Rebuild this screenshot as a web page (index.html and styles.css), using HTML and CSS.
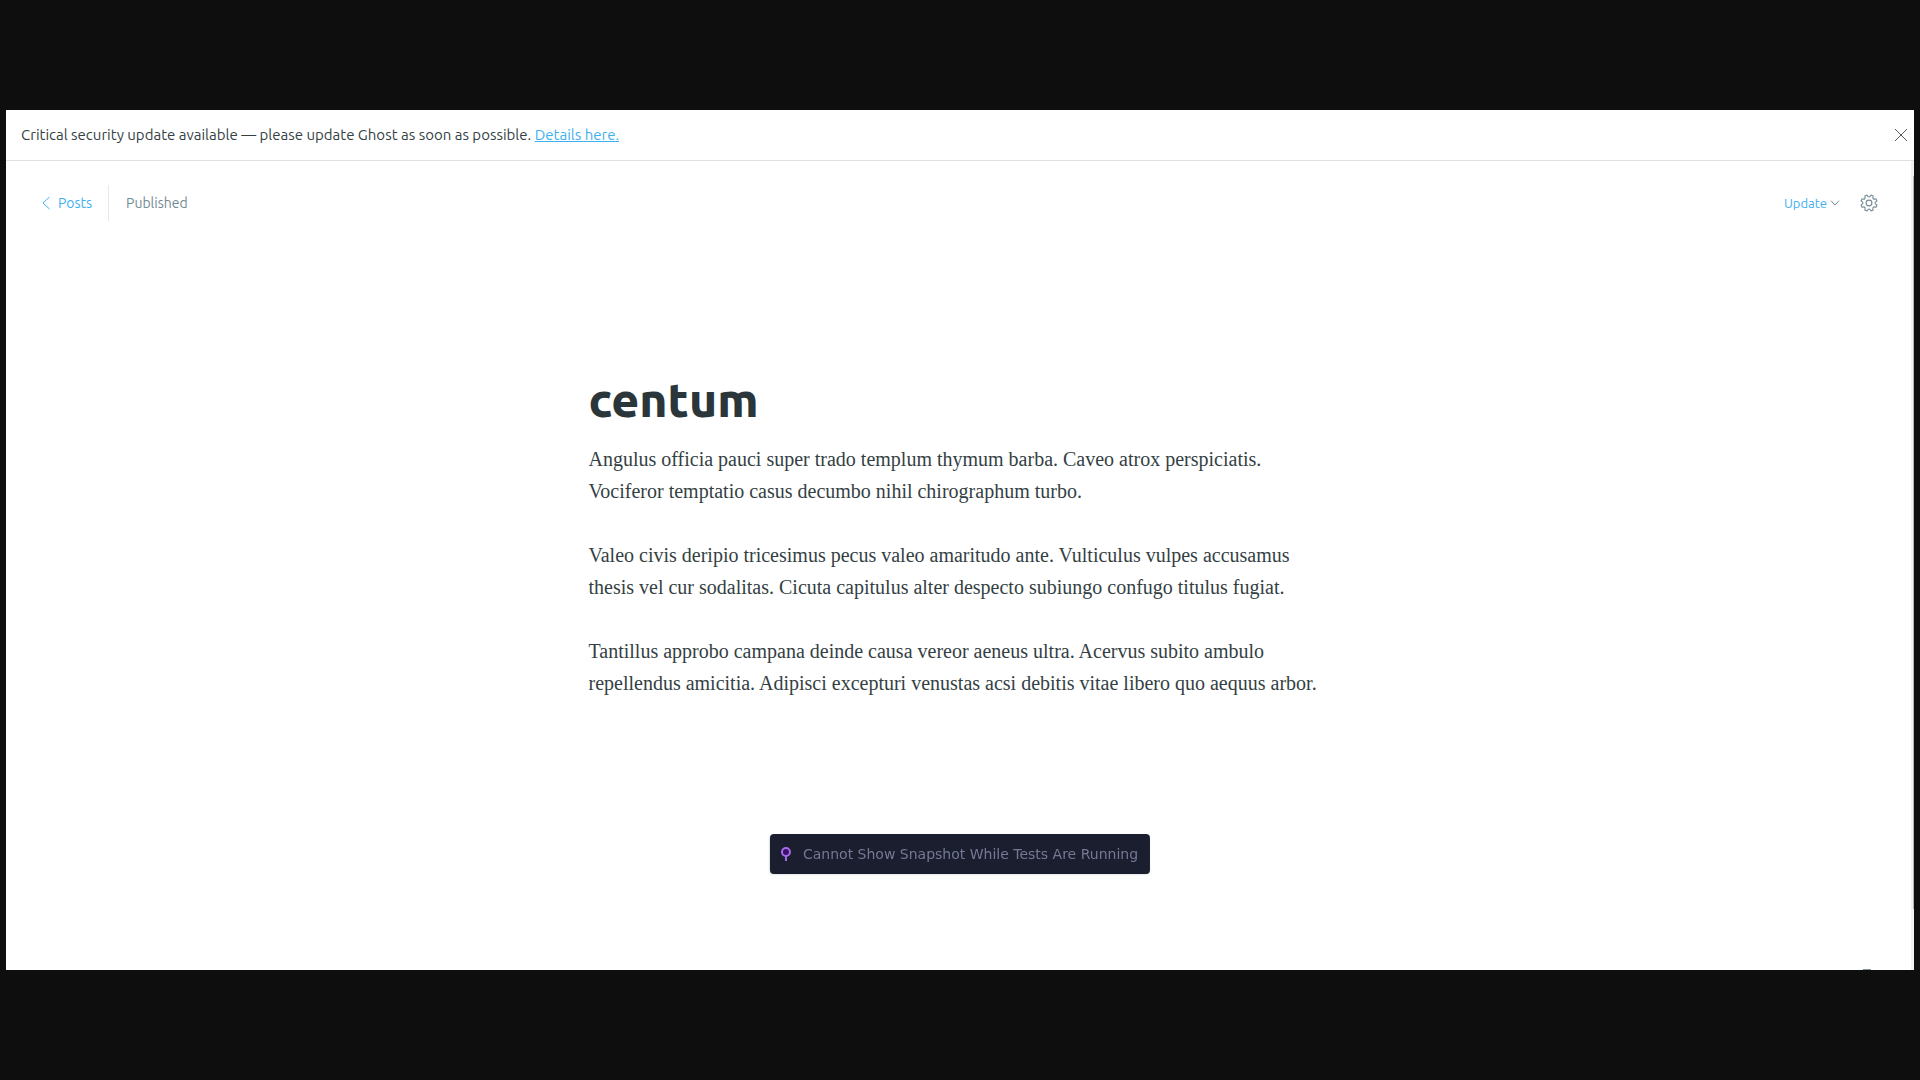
FILE: index.html
```html
<!DOCTYPE html>
<html lang="en">
<head>
<meta charset="utf-8">
<title>centum</title>
<link rel="stylesheet" href="styles.css">
</head>
<body>
<div class="app">
  <aside class="alert">
    <p class="alert-text">Critical security update available — please update Ghost as soon as possible. <a class="alert-link" href="#details">Details here.</a></p>
    <button class="icon-button alert-close" type="button" aria-label="Close">
      <svg width="14" height="14" viewBox="0 0 14 14" fill="none" stroke="currentColor"><path d="M1 1l12 12M13 1L1 13"/></svg>
    </button>
  </aside>
  <div class="viewport">
    <main class="editor">
      <header class="toolbar">
        <a class="back" href="#posts"><svg width="8" height="14" viewBox="0 0 8 14" fill="none" stroke="currentColor"><path d="M7.500 1L1 7l6.500 6"/></svg>Posts</a>
        <span class="status">Published</span>
        <div class="actions">
          <button class="update" type="button">Update<svg width="10" height="6" viewBox="0 0 10 6" fill="none" stroke="#738a94"><path d="M1 .7L5 5 9 .7"/></svg></button>
          <button class="icon-button settings" type="button" aria-label="Settings">
            <svg width="18" height="18" viewBox="0 0 18 18" fill="none" stroke="currentColor" stroke-width="1.100" stroke-linejoin="round"><circle cx="9" cy="9" r="2.900"/><path d="M6.950 1.060Q9 4.900 11.050 1.060L13.160 1.930Q11.900 6.100 16.070 4.840L16.940 6.950Q13.100 9 16.940 11.050L16.070 13.160Q11.900 11.900 13.160 16.070L11.050 16.940Q9 13.100 6.950 16.940L4.840 16.070Q6.100 11.900 1.930 13.160L1.060 11.050Q4.900 9 1.060 6.950L1.930 4.840Q6.100 6.100 4.840 1.930Z"/></svg>
          </button>
        </div>
      </header>
      <article class="post">
        <h1 class="title">centum</h1>
        <p>Angulus officia pauci super trado templum thymum barba. Caveo atrox perspiciatis. Vociferor temptatio casus decumbo nihil chirographum turbo.</p>
        <p>Valeo civis deripio tricesimus pecus valeo amaritudo ante. Vulticulus vulpes accusamus thesis vel cur sodalitas. Cicuta capitulus alter despecto subiungo confugo titulus fugiat.</p>
        <p>Tantillus approbo campana deinde causa vereor aeneus ultra. Acervus subito ambulo repellendus amicitia. Adipisci excepturi venustas acsi debitis vitae libero quo aequus arbor.</p>
      </article>
      <span class="help-edge"></span>
    </main>
    <div class="scrollbar"><div class="thumb"></div></div>
  </div>
</div>
<div class="snapshot" role="status">
  <svg width="10" height="14" viewBox="0 0 10 14"><path d="M5 9v5" stroke="#a36de9" stroke-width="2"/><circle cx="5" cy="5" r="4" fill="#3c0f6b" stroke="#a36de9" stroke-width="2"/></svg>
  <span>Cannot Show Snapshot While Tests Are Running</span>
</div>
</body>
</html>
```
FILE: styles.css
```css
* { box-sizing: border-box; }
body {
  margin: 0;
  height: 100vh;
  padding: 110px 6px;
  display: flex;
  background: #0e0e0e;
  color: #343f44;
  font-family: Ubuntu, "Noto Sans", sans-serif;
}
button {
  padding: 0;
  border: 0;
  background: none;
  font: inherit;
}
svg { display: block; flex: none; }
.app {
  flex: 1;
  min-width: 0;
  display: flex;
  flex-direction: column;
  background: #fff;
  overflow: hidden;
}
.alert {
  display: flex;
  align-items: center;
  justify-content: space-between;
  padding: 14px 6px 14px 15px;
  border-bottom: 1px solid #dfe1e3;
}
.alert-text {
  margin: 0;
  font-size: 15px;
  line-height: 22px;
}
.alert-link { color: #3eb0ef; }
.icon-button { display: flex; }
.alert-close { color: #54595f; }
.viewport {
  flex: 1;
  min-height: 0;
  display: flex;
}
.editor {
  flex: 1;
  min-width: 0;
  position: relative;
}
.toolbar {
  display: flex;
  align-items: center;
  padding: 24px 33px 0 36px;
  font-size: 14px;
  line-height: 36px;
}
.back {
  display: flex;
  align-items: center;
  gap: 8px;
  padding-right: 16px;
  border-right: 1px solid #dfe9f1;
  color: #3eb0ef;
  text-decoration: none;
}
.status {
  padding-left: 17px;
  color: #738a94;
}
.actions {
  display: flex;
  align-items: center;
  gap: 20px;
  margin-left: auto;
}
.update {
  display: flex;
  align-items: center;
  gap: 3px;
  color: #3eb0ef;
  font-size: 13px;
}
.settings { color: #738a94; }
.post {
  max-width: 740px;
  margin: 0 auto;
  padding-top: 150px;
  font-family: "Liberation Serif", serif;
  font-size: 20px;
  line-height: 32px;
}
.post p { margin: 0 0 32px; }
.title {
  margin: 0 0 16px;
  color: #2b363b;
  font: 800 48px/56px Ubuntu, "Noto Sans", sans-serif;
}
.help-edge {
  position: absolute;
  right: 40px;
  bottom: 0;
  width: 8px;
  height: 1px;
  background: #83949c;
}
.scrollbar {
  width: 3px;
  padding: 15px 0 61px 2px;
  background: #f1f1f1;
}
.thumb {
  height: 100%;
  background: #b4b4b4;
}
.snapshot {
  position: fixed;
  left: 50%;
  bottom: 206px;
  transform: translateX(-50%);
  display: flex;
  align-items: center;
  gap: 12px;
  padding: 0 12px 0 11px;
  border-radius: 4px;
  background: #1b1e2e;
  color: #747994;
  box-shadow: 0 1px 2px rgba(0, 0, 0, .1);
  font: 14px/40px "DejaVu Sans", sans-serif;
  white-space: nowrap;
}
```
